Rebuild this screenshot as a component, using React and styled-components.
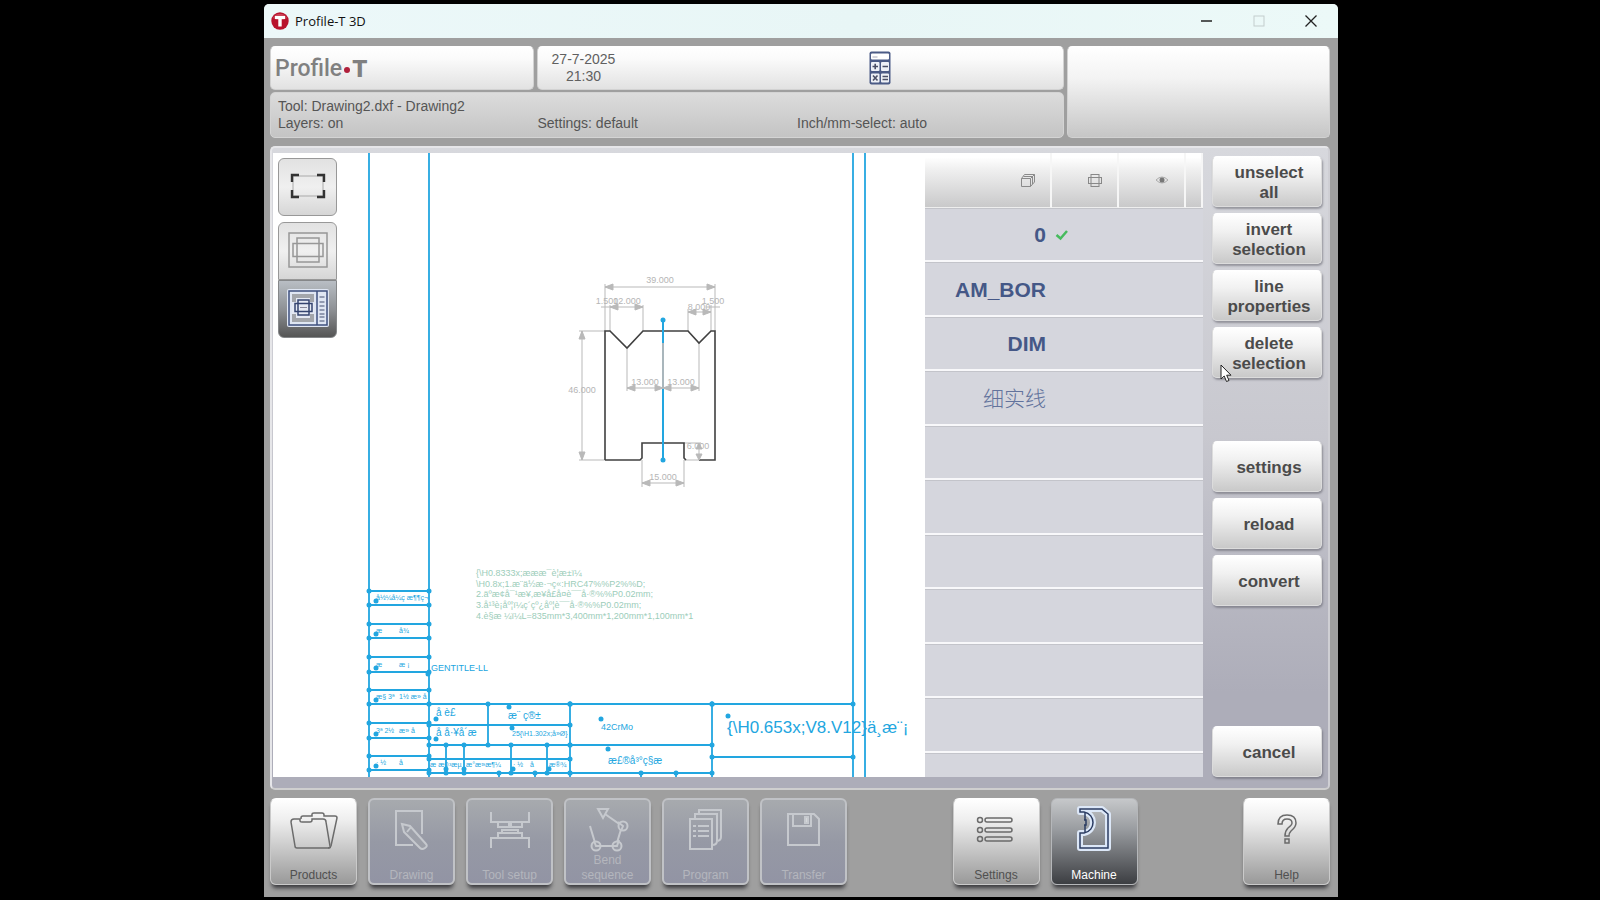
import React from 'react';
import styled, { createGlobalStyle, css } from 'styled-components';

const GlobalStyle = createGlobalStyle`
  * {
    box-sizing: border-box;
  }

  body {
    margin: 0;
    background: #000;
    font-family: 'Liberation Sans', Arial, sans-serif;
  }

  button {
    font-family: inherit;
    cursor: pointer;
  }
`;

// Styled Components
const Desktop = styled.div`
  height: 100vh;
  min-height: 720px;
  padding: 4px 262px 3px 264px;
`;

const AppWindow = styled.div`
  display: flex;
  flex-direction: column;
  height: 100%;
  overflow: hidden;
  background: #9f9f9f;
  border-radius: 5px 5px 0 0;
`;

const TitleBar = styled.header`
  display: flex;
  align-items: center;
  flex: none;
  height: 34px;
  padding: 0 1px 0 7px;
  background: linear-gradient(90deg, #ecf8f9, #e8f6f6 55%, #ecf9f8);
`;

const WindowTitle = styled.h1`
  flex: 1;
  margin: 0 0 0 6px;
  font-family: 'Open Sans', 'Noto Sans', sans-serif;
  font-size: 13px;
  font-weight: 400;
  color: #111;
`;

const WindowButton = styled.button`
  display: flex;
  align-items: center;
  justify-content: center;
  width: 52px;
  height: 34px;
  padding: 0;
  border: 0;
  background: none;
`;

const Body = styled.div`
  display: flex;
  flex: 1;
  flex-direction: column;
  gap: 8px;
  min-height: 0;
  padding: 8px 8px 12px 6px;
`;

const TopGrid = styled.div`
  display: grid;
  flex: none;
  grid-template-columns: 1fr 2fr 1fr;
  grid-template-rows: 44px 46px;
  gap: 2px 3px;
`;

const Card = styled.section`
  display: flex;
  align-items: center;
  border: 1px solid #d2d2d2;
  border-top-color: #fff;
  border-radius: 5px;
  background: linear-gradient(#fff, #fafafa 30%, #e2e2e2);
`;

const TallCard = styled(Card)`
  grid-column: 3;
  grid-row: 1 / 3;
  background: linear-gradient(#fff, #f3f3f3 35%, #c6c6c6);
`;

const InfoCard = styled(Card)`
  grid-column: 1 / 3;
  display: grid;
  grid-template-columns: repeat(3, 1fr);
  align-content: center;
  padding: 0 6px 0 7px;
  border-color: #d4d4d4;
  background: linear-gradient(#dcdcdc, #c4c4c4);
  font-size: 14px;
  line-height: 17px;
  color: #555;
`;

const InfoTitle = styled.div`
  grid-column: 1 / -1;
`;

const Brand = styled.div`
  display: flex;
  align-items: center;
  padding: 2px 0 0 4px;
  font-family: Roboto, sans-serif;
  font-size: 23px;
  font-weight: 500;
  line-height: 26px;
  color: #808080;

  b {
    font-size: 24px;
    font-weight: 900;
  }
`;

const BrandDot = styled.span`
  width: 6px;
  height: 6px;
  margin: 2px 2px 0 2px;
  border-radius: 50%;
  background: #b0203c;
`;

const Clock = styled.time`
  width: 92px;
  text-align: center;
  font-size: 14px;
  line-height: 17px;
  color: #606060;
`;

const CardSlot = styled.div`
  flex: 1;
  padding-left: 23px;
  line-height: 0;
`;

const Workspace = styled.main`
  display: grid;
  flex: 1;
  grid-template-columns: minmax(0, 1fr) 278px 125px;
  grid-template-rows: minmax(0, 1fr);
  min-height: 0;
  padding: 5px 0 11px 1px;
  border: 2px solid #e6e6e9;
  border-right-color: #cfcfd4;
  border-bottom-color: #cfcfcf;
  border-radius: 5px;
  background: linear-gradient(#d7d8dd, #c8c8cf 45%, #adadb9 85%, #adadb9);
`;

const Canvas = styled.div`
  display: grid;
  overflow: hidden;
  background: #fff;
`;

const Drawing = styled.svg`
  grid-area: 1 / 1;
  width: 100%;
  height: 100%;
  min-height: 0;
  font-family: 'Liberation Sans', Arial, sans-serif;
`;

const ViewTools = styled.div`
  z-index: 1;
  grid-area: 1 / 1;
  justify-self: start;
  align-self: start;
  padding: 5px;
`;

const ToolButton = styled.button`
  display: flex;
  align-items: center;
  justify-content: center;
  width: 59px;
  height: 58px;
  padding: 0 0 3px;
  border: 1px solid #989898;
  border-radius: ${(p) => p.$corners || '6px'};
  background: linear-gradient(#e2e2e2, #f0f0f0 50%, #d6d6d6);
  ${(p) =>
    p.$active &&
    css`
      border-color: #858789;
      background: linear-gradient(#b9bec4, #8f9296 50%, #555);
    `}
`;

const ToolGroup = styled.div`
  margin-top: 6px;
`;

const LayerPane = styled.div`
  overflow: hidden;
  background: #d5d6dd;
`;

const LayerTable = styled.table`
  width: 100%;
  border-spacing: 0;
  table-layout: fixed;
`;

const HeadCell = styled.th`
  width: ${(p) => p.$width || 'auto'};
  height: 55px;
  padding: 0 ${(p) => p.$inset || '15px'} 0 0;
  border-right: 2px solid #f6f6f6;
  border-bottom: 1px solid #eee;
  background: linear-gradient(#fff 8%, #f0f0f0 30%, #c9c9ca);
  text-align: right;
  line-height: 0;
`;

const LayerRow = styled.tr`
  height: 54px;

  &:nth-child(even) {
    height: 55px;
  }
`;

const LayerCell = styled.td`
  padding: 2px 6px 0 3px;
  border-bottom: 2px solid #f8f8fa;
  box-shadow: inset 0 1px 0 #c3c4ca;
  line-height: 0;
`;

const LayerName = styled(LayerCell)`
  text-align: right;
  font-family: 'Liberation Sans', 'Noto Sans CJK SC', sans-serif;
  font-size: 21px;
  font-weight: ${(p) => (p.$thin ? 300 : 700)};
  line-height: 24px;
  color: ${(p) => (p.$thin ? '#62739c' : '#455887')};
`;

const Actions = styled.div`
  display: grid;
  grid-auto-rows: 51px;
  gap: 6px;
  align-content: start;
  padding: 3px 6px 0 9px;
`;

const ActionButton = styled.button`
  position: relative;
  grid-row: ${(p) => p.$row};
  padding: 2px 0 0 4px;
  border: 1px solid #dcdcdc;
  border-top-color: #fff;
  border-radius: 5px;
  background: linear-gradient(#fff, #f1f1f1 35%, #c9c9c9);
  box-shadow: 1px 2px 2px rgba(90, 90, 100, 0.5);
  font-size: 17px;
  font-weight: 700;
  line-height: 20px;
  color: #4b4b4b;
  white-space: pre-line;
`;

const Pointer = styled.svg`
  position: absolute;
  left: 7px;
  top: 36px;
  z-index: 2;
`;

const NavBar = styled.nav`
  display: flex;
  flex: none;
  justify-content: space-between;
`;

const NavGroup = styled.div`
  display: flex;
  gap: 11px;
`;

const NavButton = styled.button`
  display: flex;
  flex-direction: column;
  align-items: center;
  justify-content: space-between;
  width: 87px;
  height: 87px;
  padding: 7px 0 1px;
  border: 1px solid #cacaca;
  border-top-color: #fff;
  border-radius: 6px;
  background: linear-gradient(#fff, #eee 25%, #999);
  box-shadow: 0 5px 4px -2px rgba(30, 30, 35, 0.8);
  font-size: 12px;
  line-height: 15px;
  color: #505050;

  &:disabled {
    border: 2px solid #c0c2c6;
    padding: 6px 0 0;
    background: linear-gradient(#a7aaae, #9699a5 50%, #9294a4);
    color: #b4b6bd;
    cursor: default;
  }

  ${(p) =>
    p.$active &&
    css`
      border-color: #b5b7ba;
      background: linear-gradient(#c6c8ca, #9a9da1 35%, #3c3e42);
      color: #fff;
    `}
`;

const NavIcon = styled.svg`
  flex: none;
  width: 50px;
  height: 50px;
  fill: none;
  stroke: ${(p) => (p.$dim ? '#c6c9ce' : p.$stroke || '#6b6b6b')};
  stroke-width: ${(p) => (p.$dim ? 2 : 1.5)};
`;

const NavLabel = styled.span`
  width: 64px;
  margin-top: -10px;
`;

const BLUE = '#22a6e0';
const GREY = '#b9b9b9';

// Icons
const AppIcon = () => (
  <svg width="18" height="18" viewBox="0 0 18 18" aria-hidden="true">
    <circle cx="9" cy="9" r="8.7" fill="#b8122c" />
    <path d="M2 6a8 8 0 0 1 14 0C12 9 6 9 2 6z" fill="#d35a6b" opacity="0.7" />
    <path d="M4 4h10v3H10.700v7.500H7.300V7H4z" fill="#fff" />
  </svg>
);

const CalculatorIcon = () => (
  <svg width="22" height="34" viewBox="0 0 22 34" aria-hidden="true">
    <rect x="0.500" y="0.500" width="21" height="33" rx="2" fill="#4b5b86" />
    <rect x="2" y="2.500" width="18" height="6" rx="1" fill="#fff" />
    <path d="M3.500 6h5" stroke="#aab" />
    <g fill="#eef1f7">
      <rect x="2" y="11" width="8.500" height="9" rx="1" />
      <rect x="12" y="11" width="8" height="9" rx="1" />
      <rect x="2" y="22.500" width="8.500" height="9" rx="1" />
      <rect x="12" y="22.500" width="8" height="9" rx="1" />
    </g>
    <g stroke="#4a4f66" strokeWidth="1.600">
      <path d="M3.500 15.500h5.500M6.200 12.800v5.400M13.500 15.500h5.500M4 24.500l4.500 5M8.500 24.500l-4.500 5M13.500 25.500h5.500M13.500 28.500h5.500" />
    </g>
  </svg>
);

const FitIcon = () => (
  <svg width="36" height="26" viewBox="0 0 36 26" fill="none" aria-hidden="true">
    <rect x="3" y="3" width="30" height="20" stroke="#aaa" />
    <path d="M2 9V2h7M27 2h7v7M34 17v7h-7M9 24H2v-7" stroke="#333" strokeWidth="2.400" />
  </svg>
);

const OverviewIcon = () => (
  <svg width="40" height="36" viewBox="0 0 40 36" fill="none" stroke="#979797" strokeWidth="1.500" aria-hidden="true">
    <rect x="1" y="1" width="38" height="34" />
    <rect x="9" y="6" width="22" height="24" />
    <rect x="5" y="11.500" width="30" height="13" />
  </svg>
);

const LayersViewIcon = () => (
  <svg width="44" height="40" viewBox="0 0 44 40" fill="none" aria-hidden="true">
    <rect x="1" y="1" width="42" height="38" rx="2" fill="#dfe6f3" />
    <rect x="3" y="3" width="38" height="34" stroke="#3e4f7e" strokeWidth="1.500" />
    <path d="M6 6h22v28H6z" fill="#a3a6ab" />
    <path d="M10 10h14v20H10z M6 14h22v12H6z" fill="#e5eaf4" />
    <path d="M31 3v34" stroke="#3e4f7e" strokeWidth="1.500" />
    <g stroke="#34446f" strokeWidth="1.500">
      <rect x="12" y="12" width="11" height="15" />
      <rect x="9" y="15.500" width="17" height="8" />
    </g>
    <path d="M14 19.500h7" stroke="#889" />
    <path d="M33.500 9h5M33.500 14h5M33.500 18h5M33.500 22h5M33.500 26h5M33.500 29h5M33.500 33h5" stroke="#444f70" strokeWidth="1.200" />
  </svg>
);

const StackIcon = () => (
  <svg width="14" height="13" viewBox="0 0 14 13" fill="none" stroke="#8a8a8a" aria-hidden="true">
    <path d="M0.500 4.500h9v8h-9zM0.500 4.500l3-4h10l-4 4M13.500 0.500v7.500l-4 4.500M2.500 2.500h9v7.500" />
  </svg>
);

const ShapeIcon = () => (
  <svg width="14" height="13" viewBox="0 0 14 13" fill="none" stroke="#888" aria-hidden="true">
    <rect x="3" y="0.500" width="8" height="12" />
    <rect x="0.500" y="3.500" width="13" height="6" />
  </svg>
);

const EyeIcon = () => (
  <svg width="14" height="10" viewBox="0 0 14 10" fill="none" aria-hidden="true">
    <path d="M1 5q6-6 12 0q-6 6-12 0z" stroke="#aaa" />
    <circle cx="7" cy="5" r="2.500" fill="#777" />
  </svg>
);

const CheckIcon = () => (
  <svg width="14" height="12" viewBox="0 0 14 12" fill="none" role="img" aria-label="on">
    <path d="M1.500 6l4 3.500L12 2" stroke="#46bb5d" strokeWidth="2.500" />
  </svg>
);

const ProductsIcon = () => (
  <NavIcon>
    <path d="M6 40L2 16q0-3 3-3h6v2q0 1 2 1h8q2 0 2-2v-1h11q3 0 3 3l4 24q1 2-1 2H8q-2 0-2-2z" />
    <path d="M12 13v-1q0-2 2-2h9V8q0-1 2-1h8q2 0 2 2v1h11q2 0 2 2l-6 28q-1 2-3 2" />
  </NavIcon>
);

const DrawingIcon = () => (
  <NavIcon $dim>
    <path d="M35 28V5H9v34h17" />
    <path d="M15 18l8 2 16 18q2 2-1 4t-5 0L17 26zM20 26l4-5" fill="#9da0a9" />
  </NavIcon>
);

const ToolSetupIcon = () => (
  <NavIcon $dim>
    <path d="M6 6v10h38V6M13 16v5h11v-5M26 16v5h11v-5M6 42V32h38v10M13 32v-5h24v5M17 27v-3h16v3" />
  </NavIcon>
);

const BendIcon = () => (
  <NavIcon $dim>
    <path d="M7 20l6 20h20l6-20L22 8" />
    <path d="M15 3h10l-5 9z" fill="#a0a3aa" />
    <g fill="#9b9ea8">
      <circle cx="13" cy="40" r="4.500" />
      <circle cx="34" cy="40" r="4.500" />
      <circle cx="40" cy="20" r="4.500" />
    </g>
    <path d="M11 35l2 5h7M27 40h7l2-6M38 25l2-5-5-4" />
  </NavIcon>
);

const ProgramIcon = () => (
  <NavIcon $dim>
    <path d="M18 8V4h22v27q0 4-5 4M14 13V8h22v27q0 4-5 4" />
    <path d="M9 13h22v30H9zM12 20h3M17 20h11M12 25h3M17 25h11M12 30h3M17 30h11" />
  </NavIcon>
);

const TransferIcon = () => (
  <NavIcon $dim>
    <path d="M9 8h26l5 5v26H9zM14 8v12h18V8" />
    <path d="M26 11h3v6h-3z" fill="#d5d7da" />
  </NavIcon>
);

const SettingsIcon = () => (
  <NavIcon>
    {[13, 23, 32].map((y) => (
      <g key={y}>
        <circle cx="9" cy={y + 1} r="2.500" />
        <rect x="14" y={y - 1} width="27" height="4" rx="2" />
      </g>
    ))}
  </NavIcon>
);

const MachineHalo = styled.path`
  stroke: #dce7f7;
  stroke-width: 6;
  stroke-linejoin: round;
`;

const MachineIcon = () => {
  const shape = 'M11 3h22l6 5v34H11V27h4C27 25 27 8 15 6h-4z';
  return (
    <NavIcon $stroke="#2b3c62">
      <MachineHalo d={shape} />
      <path d={shape} />
      <path d="M16 7v7M16 19v7M15 14h2v5h-2" />
    </NavIcon>
  );
};

const HelpIcon = () => (
  <NavIcon>
    <path d="M16 18q0-9 9-9t9 8q0 4-5 8q-2 2-2 5h-4q0-5 3-8q4-3 4-5q0-4-5-4t-5 5zM23 33h4v4h-4z" />
  </NavIcon>
);

// Drawing canvas
const Dots = ({ points }) =>
  points.map(([x, y]) => <circle key={`${x}-${y}`} cx={x} cy={y} r="2.500" fill={BLUE} />);

const Segments = ({ lines }) => (
  <>
    <path
      d={lines.map(([x1, y1, x2, y2]) => `M${x1} ${y1}L${x2} ${y2}`).join('')}
      stroke={BLUE}
      strokeWidth="1.800"
      fill="none"
    />
    <Dots points={lines.flatMap(([x1, y1, x2, y2]) => [[x1, y1], [x2, y2]]).filter(([, y]) => y > 160 && y < 776)} />
  </>
);

const DimH = ({ x1, x2, y }) => (
  <path
    d={`M${x1} ${y}H${x2}M${x1} ${y}l8-3v6zM${x2} ${y}l-8-3v6z`}
    stroke={GREY}
    fill={GREY}
  />
);

const DimV = ({ x, y1, y2, head = 8 }) => (
  <path
    d={`M${x} ${y1}V${y2}M${x} ${y1}l-3 ${head}h6zM${x} ${y2}l-3 -${head}h6z`}
    stroke={GREY}
    fill={GREY}
  />
);

const dimTexts = [
  [660, 283, '39.000'],
  [607, 304, '1.500'],
  [627, 304, '12.000'],
  [699, 310, '8.000'],
  [713, 304, '1.500'],
  [582, 393, '46.000'],
  [645, 385, '13.000'],
  [681, 385, '13.000'],
  [698, 449, '6.000'],
  [663, 480, '15.000'],
];

const notes = [
  '{\\H0.8333x;æææ¯è¦æ±ï¼',
  '\\H0.8x;1.æ¨ä½æ·¬ç«:HRC47%%P2%%D;',
  '2.äºæ¢å¯¹æ¥,æ¥å£å¤è¯¯å·®%%P0.02mm;',
  '3.å¹³è¡åº¦ï¼ç´çº¿åº¦è¯¯å·®%%P0.02mm;',
  '4.è§æ ¼ï¼L=835mm*3,400mm*1,200mm*1,100mm*1',
];

const marginRows = [
  [591, 605, 'å½¼å¼ç æ¶¶ç¬', ''],
  [624, 638, 'æ', 'å¾'],
  [657, 672, 'æ', 'æ ¡'],
  [690, 704, 'æ§ 3ª', '1½ æ» å'],
  [723, 738, '3ª 2½', 'æ» å'],
  [756, 770, '· ½', 'å'],
];

const titleBlock = [
  [429, 704, 570, 704],
  [570, 704, 712, 704],
  [712, 704, 853, 704],
  [429, 725, 570, 725],
  [429, 745, 570, 745],
  [570, 745, 712, 745],
  [429, 759, 570, 759],
  [429, 773, 570, 773],
  [570, 773, 712, 773],
  [712, 757, 853, 757],
  [488, 704, 488, 745],
  [570, 704, 570, 778],
  [712, 704, 712, 778],
  [446, 745, 446, 773],
  [464, 745, 464, 773],
  [511, 745, 511, 773],
  [547, 745, 547, 773],
  [499, 773, 499, 778],
  [535, 773, 535, 778],
  [641, 773, 641, 778],
  [676, 773, 676, 778],
];

const blockTexts = [
  [431, 671, 9, 'GENTITLE-LL'],
  [436, 716, 10, 'å  è£'],
  [436, 736, 10, 'å å·¥å´æ'],
  [508, 719, 10, 'æ¨ ç®±'],
  [512, 736, 7, '25{\\H1.302x;å»Ø}'],
  [601, 730, 9, '42CrMo'],
  [608, 764, 10, 'æ£®å³°ç§æ'],
  [430, 767, 7, 'æ æ0'],
  [449, 767, 7, '³æµ'],
  [466, 767, 7, 'æ°æ»æ¶¼'],
  [513, 767, 7, '· ½'],
  [530, 767, 7, 'å'],
  [549, 767, 7, 'æ®¾'],
  [727, 733, 17, '{\\H0.653x;V8.V12}ä¸æ¨¡'],
];

const ProfileDrawing = () => (
  <Drawing role="img" aria-label="Drawing2.dxf">
    <g transform="translate(-273 -153)">
      <Segments lines={[[369, 153, 369, 778], [429, 153, 429, 778], [853, 153, 853, 778], [865, 153, 865, 778]]} />
      {marginRows.map(([top, bottom, left, right]) => (
        <g key={top} fill={BLUE} fontSize="7">
          <Segments lines={[[369, top, 429, top], [369, bottom, 429, bottom]]} />
          <circle cx="376" cy={bottom - 4} r="2.500" />
          <text x="376" y={bottom - 5}>{left}</text>
          {right && <text x="399" y={bottom - 5}>{right}</text>}
        </g>
      ))}
      <Segments lines={titleBlock} />
      <Dots
        points={[[428, 674], [436, 719], [509, 707], [512, 728], [436, 739], [601, 719], [608, 749], [446, 769], [464, 769], [513, 769], [549, 769], [728, 716]]}
      />
      <g fill={BLUE}>
        {blockTexts.map(([x, y, size, text]) => (
          <text key={`${x}-${y}`} x={x} y={y} fontSize={size}>{text}</text>
        ))}
      </g>
      <g fill="#9ccdba" fontSize="9">
        {notes.map((note, i) => (
          <text key={note} x="476" y={576 + i * 11 - (i > 1 ? 1 : 0)}>{note}</text>
        ))}
      </g>

      {/* extension lines */}
      <path
        d="M605 284V331M715 284V331M610 305V331M643 305V331M688 309V331M711 305V331M579 331H605M579 460H605M627 349V391M699 343V391M642 460V487M684 460V487M684 443H701M684 460H699M601 307H612M706 307H720"
        stroke={GREY}
        fill="none"
      />
      <path
        d="M605 460V331H610L627 348L643 331H688L699 343L711 331H715V460H699M605 460H640L642 458V443H684V458L686 460"
        stroke="#404040"
        strokeWidth="1.600"
        fill="none"
      />
      <path d="M663 319V459" stroke={BLUE} strokeWidth="2" />
      <path d="M663 343V388" stroke="#a9b6bc" strokeWidth="2" />
      <Dots points={[[663, 320], [663, 460]]} />
      <DimH x1={605} x2={715} y={287} />
      <DimH x1={610} x2={643} y={307} />
      <DimH x1={688} x2={711} y={312} />
      <DimH x1={627} x2={663} y={388} />
      <DimH x1={663} x2={699} y={388} />
      <DimH x1={642} x2={684} y={483} />
      <DimV x={582} y1={331} y2={460} />
      <DimV x={699} y1={443} y2={460} head={6} />
      <g fill="#b5b5b5" fontSize="9" textAnchor="middle">
        {dimTexts.map(([x, y, text]) => (
          <text key={`${x}-${y}`} x={x} y={y}>{text}</text>
        ))}
      </g>
    </g>
  </Drawing>
);

const layers = [
  { name: '0', on: true },
  { name: 'AM_BOR' },
  { name: 'DIM' },
  { name: '细实线', thin: true },
  ...Array.from({ length: 7 }, () => ({ name: '' })),
];

const actions = [
  { row: 1, label: 'unselect\nall' },
  { row: 2, label: 'invert\nselection' },
  { row: 3, label: 'line\nproperties' },
  { row: 4, label: 'delete\nselection', hovered: true },
  { row: 6, label: 'settings' },
  { row: 7, label: 'reload' },
  { row: 8, label: 'convert' },
  { row: 11, label: 'cancel' },
];

const navGroups = [
  [
    { label: 'Products', Icon: ProductsIcon },
    { label: 'Drawing', Icon: DrawingIcon, disabled: true },
    { label: 'Tool setup', Icon: ToolSetupIcon, disabled: true },
    { label: 'Bend sequence', Icon: BendIcon, disabled: true },
    { label: 'Program', Icon: ProgramIcon, disabled: true },
    { label: 'Transfer', Icon: TransferIcon, disabled: true },
  ],
  [
    { label: 'Settings', Icon: SettingsIcon },
    { label: 'Machine', Icon: MachineIcon, active: true },
  ],
  [{ label: 'Help', Icon: HelpIcon }],
];

const App = () => {
  const [view, setView] = React.useState('layers');

  return (
    <Desktop>
      <GlobalStyle />
      <AppWindow>
        <TitleBar>
          <AppIcon />
          <WindowTitle>Profile-T 3D</WindowTitle>
          <WindowButton aria-label="Minimize">
            <svg width="12" height="12"><path d="M0 6h11" stroke="#222" strokeWidth="1.500" /></svg>
          </WindowButton>
          <WindowButton aria-label="Maximize" disabled>
            <svg width="12" height="12"><rect x="1" y="1" width="10" height="10" fill="none" stroke="#c3cdcd" /></svg>
          </WindowButton>
          <WindowButton aria-label="Close">
            <svg width="12" height="12"><path d="M0.500 0.500l11 11M11.500 0.500l-11 11" stroke="#222" strokeWidth="1.300" /></svg>
          </WindowButton>
        </TitleBar>

        <Body>
          <TopGrid>
            <Card>
              <Brand>Profile<BrandDot /><b>T</b></Brand>
            </Card>
            <Card>
              <Clock>27-7-2025<br />21:30</Clock>
              <CardSlot />
              <CardSlot><CalculatorIcon /></CardSlot>
            </Card>
            <TallCard />
            <InfoCard>
              <InfoTitle>Tool: Drawing2.dxf - Drawing2</InfoTitle>
              <div>Layers: on</div>
              <div>Settings: default</div>
              <div>Inch/mm-select: auto</div>
            </InfoCard>
          </TopGrid>

          <Workspace>
            <Canvas>
              <ProfileDrawing />
              <ViewTools>
                <ToolButton aria-label="Zoom to fit"><FitIcon /></ToolButton>
                <ToolGroup>
                  <ToolButton
                    aria-label="Overview"
                    $corners="6px 6px 0 0"
                    $active={view === 'overview'}
                    onClick={() => setView('overview')}
                  >
                    <OverviewIcon />
                  </ToolButton>
                  <ToolButton
                    aria-label="Layer list"
                    $corners="0 0 6px 6px"
                    $active={view === 'layers'}
                    onClick={() => setView('layers')}
                  >
                    <LayersViewIcon />
                  </ToolButton>
                </ToolGroup>
              </ViewTools>
            </Canvas>

            <LayerPane>
              <LayerTable>
                <thead>
                  <tr>
                    <HeadCell $width="127px"><StackIcon /></HeadCell>
                    <HeadCell $width="67px"><ShapeIcon /></HeadCell>
                    <HeadCell $width="67px"><EyeIcon /></HeadCell>
                    <HeadCell $inset="0" />
                  </tr>
                </thead>
                <tbody>
                  {layers.map((layer, i) => (
                    <LayerRow key={i}>
                      <LayerName $thin={layer.thin}>{layer.name}</LayerName>
                      <LayerCell>{layer.on && <CheckIcon />}</LayerCell>
                      <LayerCell />
                      <LayerCell />
                    </LayerRow>
                  ))}
                </tbody>
              </LayerTable>
            </LayerPane>

            <Actions>
              {actions.map(({ row, label, hovered }) => (
                <ActionButton key={label} $row={row}>
                  {label}
                  {hovered && (
                    <Pointer width="12" height="19" viewBox="0 0 12 19" aria-hidden="true">
                      <path
                        d="M1 1v14l3.200-3 2.300 5.500 2.500-1-2.300-5.300H11z"
                        fill="#fff"
                        stroke="#222"
                      />
                    </Pointer>
                  )}
                </ActionButton>
              ))}
            </Actions>
          </Workspace>

          <NavBar>
            {navGroups.map((group, i) => (
              <NavGroup key={i}>
                {group.map(({ label, Icon, disabled, active }) => (
                  <NavButton key={label} disabled={disabled} $active={active}>
                    <Icon />
                    <NavLabel>{label}</NavLabel>
                  </NavButton>
                ))}
              </NavGroup>
            ))}
          </NavBar>
        </Body>
      </AppWindow>
    </Desktop>
  );
};

export default App;
